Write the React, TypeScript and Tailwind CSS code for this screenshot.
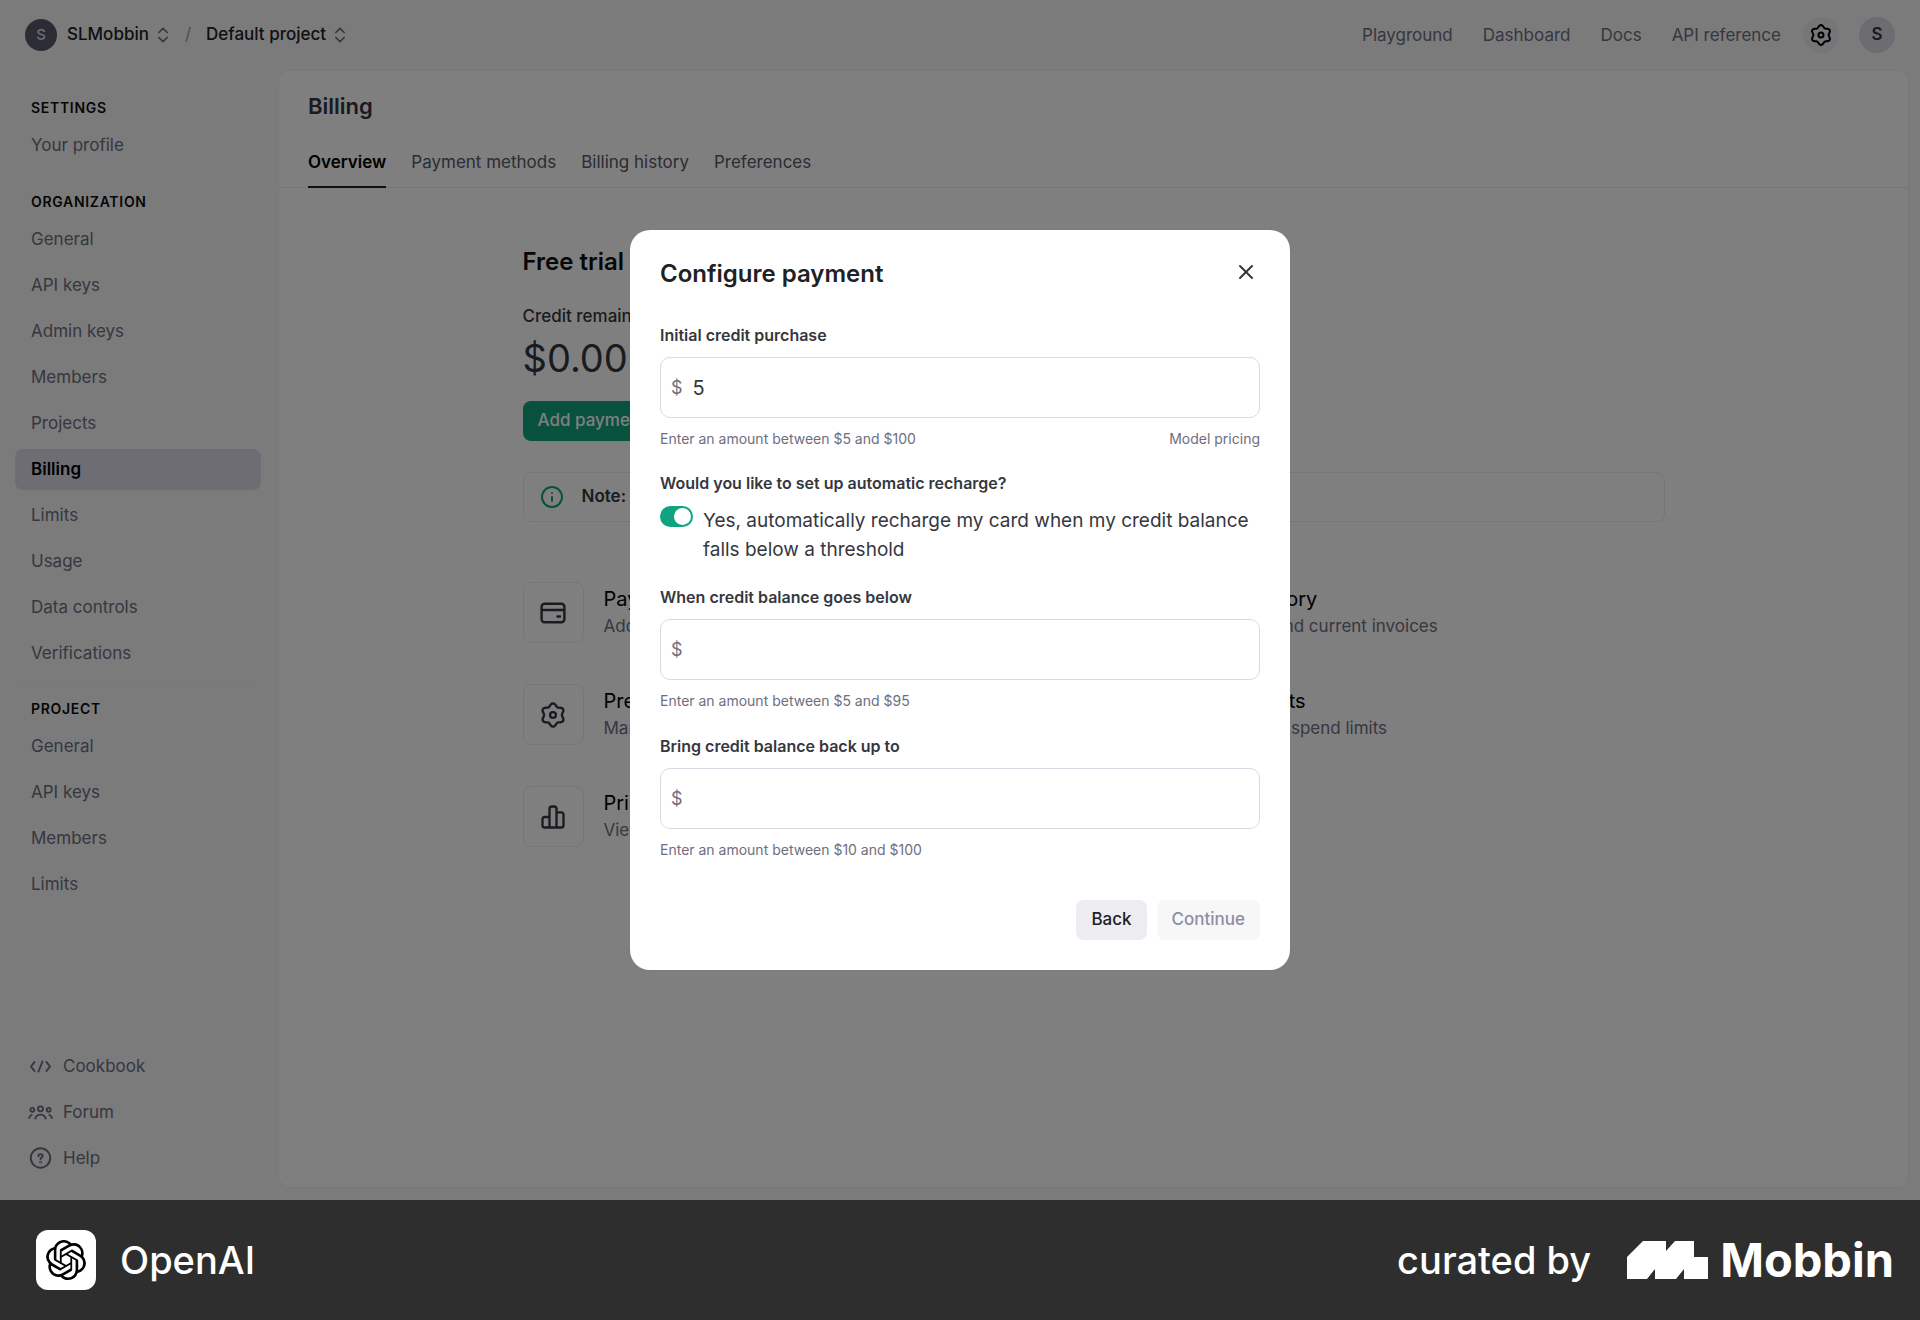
import { useState, type ReactNode } from 'react'
import { ChevronsUpDown, X, Info } from 'lucide-react'
import { SiOpenai } from 'react-icons/si'

const organizationLinks = [
  'General',
  'API keys',
  'Admin keys',
  'Members',
  'Projects',
  'Billing',
  'Limits',
  'Usage',
  'Data controls',
  'Verifications',
]

const projectLinks = ['General', 'API keys', 'Members', 'Limits']

const tabs = ['Overview', 'Payment methods', 'Billing history', 'Preferences']

// six soft lobes, first one pointing up
const gearPoints = Array.from({ length: 72 }, (_, i) => {
  const angle = (i * Math.PI) / 36
  const radius = 8.8 + 1.2 * Math.cos(6 * angle)
  return `${(12 + radius * Math.sin(angle)).toFixed(2)},${(12 - radius * Math.cos(angle)).toFixed(2)}`
}).join(' ')

function GearIcon({ className }: { className?: string }) {
  return (
    <svg className={className} viewBox="0 0 24 24" fill="none" stroke="currentColor" strokeWidth={2} strokeLinejoin="round">
      <polygon points={gearPoints} />
      <circle cx="12" cy="12" r="2.5" />
    </svg>
  )
}

function CardIcon({ className }: { className?: string }) {
  return (
    <svg className={className} viewBox="0 0 28 28" fill="none" stroke="currentColor" strokeWidth={2.4} strokeLinecap="round">
      <rect x="2.6" y="4.8" width="22.8" height="18.4" rx="3" />
      <path d="M3 11h22M18.500 17.500h2.500" />
    </svg>
  )
}

function BarsIcon({ className }: { className?: string }) {
  return (
    <svg className={className} viewBox="0 0 24 24" fill="none" stroke="currentColor" strokeWidth={2} strokeLinejoin="round">
      <path d="M9 21V5a2 2 0 0 1 2-2h2a2 2 0 0 1 2 2v16" />
      <path d="M9 12H5a2 2 0 0 0-2 2v5a2 2 0 0 0 2 2h14a2 2 0 0 0 2-2v-9a2 2 0 0 0-2-2h-4" />
    </svg>
  )
}

function CodeIcon({ className }: { className?: string }) {
  return (
    <svg className={className} viewBox="0 0 25 16" fill="none" stroke="currentColor" strokeWidth={2} strokeLinecap="round" strokeLinejoin="round">
      <path d="M6.500 3 3 7.500l3.500 4.500M18.500 3 22 7.500 18.500 12M14.500 2.500l-4 10" />
    </svg>
  )
}

function PeopleIcon({ className }: { className?: string }) {
  return (
    <svg className={className} viewBox="0 0 26 16" fill="none" stroke="currentColor" strokeWidth={2} strokeLinecap="round">
      <circle cx="13" cy="4" r="2.6" />
      <circle cx="4.500" cy="5" r="2" />
      <circle cx="21.500" cy="5" r="2" />
      <path d="M7.500 14c1-2.600 3-4 5.500-4s4.500 1.400 5.500 4M1.200 13.500c.3-1.500 1.200-2.700 2.600-3.200M24.800 13.500c-.3-1.500-1.200-2.700-2.600-3.200" />
    </svg>
  )
}

function HelpIcon({ className }: { className?: string }) {
  return (
    <svg className={className} viewBox="0 0 25 25" fill="none" stroke="currentColor" strokeWidth={2} strokeLinecap="round" strokeLinejoin="round">
      <circle cx="12.5" cy="12" r="9.7" />
      <path d="M10.300 10.100c.1-1.200 1-1.900 2.200-1.900s2.200.8 2.200 1.900c0 1.500-2.200 1.500-2.200 3" />
      <circle cx="12.5" cy="16.2" r="0.4" />
    </svg>
  )
}

function MobbinMark({ className }: { className?: string }) {
  return (
    <svg className={className} viewBox="0 0 81 38" fill="currentColor">
      <path d="M16 0h23v10L48 0h19v16h14v22H57V28l-8 10H28V28l-8 10H0V16z" />
    </svg>
  )
}

function SectionTitle({ children }: { children: ReactNode }) {
  return <h2 className="px-4 text-[14px] leading-5 font-semibold tracking-wider text-[#0d0d0d]">{children}</h2>
}

function NavList({ items, active }: { items: string[]; active?: string }) {
  return (
    <ul className="mt-[7px] space-y-[5px]">
      {items.map((item) => (
        <li key={item}>
          <a
            href="#"
            className={
              item === active
                ? 'block rounded-lg bg-[#dcdbe6] px-4 py-2 text-[17px] leading-[25px] font-semibold text-black'
                : 'block rounded-lg px-4 py-2 text-[17px] leading-[25px] text-[#6e6e80]'
            }
          >
            {item}
          </a>
        </li>
      ))}
    </ul>
  )
}

function Header() {
  return (
    <header className="flex h-[70px] items-center justify-between px-[25px]">
      <div className="flex items-center text-[17px] font-medium text-[#202123]">
        <span className="flex size-8 items-center justify-center rounded-full bg-[#565869] text-[15px] text-[#dcdbe6]">S</span>
        <button className="ml-[10px] flex items-center gap-1">
          SLMobbin <ChevronsUpDown className="size-5 text-[#6e6e80]" />
        </button>
        <span className="mx-3 font-normal text-[#9a9aa8]">/</span>
        <button className="ml-[3px] flex items-center gap-1">
          Default project <ChevronsUpDown className="size-5 text-[#6e6e80]" />
        </button>
      </div>
      <nav className="flex items-center text-[17px] text-[#6e6e80]">
        <div className="flex gap-[30px] pt-px">
          <a href="#">Playground</a>
          <a href="#">Dashboard</a>
          <a href="#">Docs</a>
          <a href="#">API reference</a>
        </div>
        <button aria-label="Settings" className="ml-[22px] flex size-9 items-center justify-center rounded-full bg-[#ececf1] text-black">
          <GearIcon className="size-6" />
        </button>
        <button className="ml-5 size-9 rounded-full bg-[#d9d9e3] font-semibold text-[#353740]">S</button>
      </nav>
    </header>
  )
}

function Sidebar() {
  return (
    <aside className="flex w-[278px] shrink-0 flex-col pt-7 pr-[17px] pb-[21px] pl-[15px]">
      <SectionTitle>SETTINGS</SectionTitle>
      <NavList items={['Your profile']} />
      <div className="mt-[26px]">
        <SectionTitle>ORGANIZATION</SectionTitle>
        <NavList items={organizationLinks} active="Billing" />
      </div>
      <div className="mt-2 border-t border-[#f1f1f4] pt-4">
        <SectionTitle>PROJECT</SectionTitle>
        <NavList items={projectLinks} />
      </div>
      <ul className="mt-auto space-y-[5px] px-[13px] text-[17px] leading-[25px] text-[#6e6e80]">
        <li>
          <a href="#" className="flex items-center gap-[10px] py-2">
            <CodeIcon className="w-[25px]" />
            Cookbook
          </a>
        </li>
        <li>
          <a href="#" className="flex items-center gap-[10px] py-2">
            <PeopleIcon className="w-[25px]" />
            Forum
          </a>
        </li>
        <li>
          <a href="#" className="flex items-center gap-[10px] py-2">
            <HelpIcon className="size-[25px]" />
            Help
          </a>
        </li>
      </ul>
    </aside>
  )
}

function LinkCard({ icon, title, text }: { icon: ReactNode; title: string; text: string }) {
  return (
    <a href="#" className="flex items-center gap-5">
      <span className="flex size-[61px] items-center justify-center rounded-lg border border-[#ececf1] text-[#353740]">{icon}</span>
      <span>
        <span className="block text-[20px] leading-7 text-black">{title}</span>
        <span className="block text-[17px] leading-[27px] text-[#6e6e80]">{text}</span>
      </span>
    </a>
  )
}

function Billing() {
  return (
    <main className="mr-[11px] mb-3 flex-1 rounded-xl border border-[#f1f1f4] bg-white">
      <h1 className="px-[29px] pt-[19px] text-[22px] leading-8 font-semibold text-[#353740]">Billing</h1>
      <nav className="mt-[18px] flex gap-[25px] border-b border-[#ececf1] px-[29px] text-[17px] leading-6 text-[#565869]">
        {tabs.map((tab, i) => (
          <a
            key={tab}
            href="#"
            className={i === 0 ? '-mb-px border-b-2 border-[#202123] pt-[10px] pb-3 font-semibold text-black' : 'pt-[10px] pb-3'}
          >
            {tab}
          </a>
        ))}
      </nav>
      <div className="mx-auto max-w-[1142px] pt-14">
        <h2 className="text-[24px] leading-9 font-semibold text-[#0d0d0d]">Free trial</h2>
        <p className="mt-6 text-[17px] leading-6 font-medium text-[#353740]">Credit remaining</p>
        <p className="mt-1 text-[38px] leading-[52px] text-[#353740]">$0.00</p>
        <button className="mt-[17px] h-10 rounded-lg bg-[#10a37f] px-[15px] text-[17px] font-medium text-white">
          Add payment details
        </button>
        <div className="mt-[31px] flex h-[50px] items-center rounded-lg border border-[#ececf1] px-4 text-[17px] text-[#353740]">
          <Info className="mr-[18px] size-6 text-[#10a37f]" />
          <p>
            <strong className="font-semibold">Note:</strong> This does not reflect the status of your ChatGPT account.
          </p>
        </div>
        <div className="mt-[60px] grid grid-cols-2 gap-x-8 gap-y-[41px]">
          <LinkCard icon={<CardIcon className="size-7" />} title="Payment methods" text="Add or change payment method" />
          <LinkCard icon={<CardIcon className="size-7" />} title="Billing history" text="View past and current invoices" />
          <LinkCard icon={<GearIcon className="size-7" />} title="Preferences" text="Manage billing information" />
          <LinkCard icon={<GearIcon className="size-7" />} title="Usage limits" text="Set monthly spend limits" />
          <LinkCard icon={<BarsIcon className="size-7" />} title="Pricing" text="View pricing and FAQs" />
        </div>
      </div>
    </main>
  )
}

type AmountFieldProps = {
  id: string
  label: string
  hint: string
  defaultValue?: string
  children?: ReactNode
}

function AmountField({ id, label, hint, defaultValue, children }: AmountFieldProps) {
  return (
    <div>
      <label htmlFor={id} className="block text-[16px] leading-6 font-semibold text-[#353740]">
        {label}
      </label>
      <div className="mt-[10px] flex h-[61px] items-center rounded-[10px] border border-[#d9d9e3] px-[10px]">
        <span className="text-[18px] text-[#6e6e80]">$</span>
        <input
          id={id}
          type="text"
          inputMode="numeric"
          defaultValue={defaultValue}
          className="ml-[10px] min-w-0 flex-1 text-[20px] text-[#353740] outline-none"
        />
      </div>
      <div className="mt-[10px] flex justify-between text-[14px] leading-[22px] text-[#6e6e80]">
        <span>{hint}</span>
        {children}
      </div>
    </div>
  )
}

function ConfigurePayment() {
  const [autoRecharge, setAutoRecharge] = useState(true)

  return (
    <div role="dialog" aria-labelledby="dialog-title" className="w-[660px] rounded-[20px] bg-white px-[30px] pt-[26px] pb-[30px]">
      <div className="flex items-start justify-between">
        <h2 id="dialog-title" className="text-[24px] leading-9 font-semibold text-[#202123]">
          Configure payment
        </h2>
        <button aria-label="Close" className="mt-1 mr-0.5 text-[#353740]">
          <X className="size-6" strokeWidth={2} />
        </button>
      </div>
      <div className="mt-[31px]">
        <AmountField id="initial" label="Initial credit purchase" hint="Enter an amount between $5 and $100" defaultValue="5">
          <a href="#">Model pricing</a>
        </AmountField>
      </div>
      <h3 className="mt-[21px] text-[16px] leading-6 font-semibold text-[#353740]">
        Would you like to set up automatic recharge?
      </h3>
      <label className="mt-[11px] flex gap-[10px] text-[#353740]">
        <input
          type="checkbox"
          role="switch"
          checked={autoRecharge}
          onChange={(e) => setAutoRecharge(e.target.checked)}
          className="h-[21px] w-[33px] shrink-0 appearance-none rounded-full bg-[#c5c5d2] p-[2px] before:block before:size-[17px] before:rounded-full before:bg-white checked:bg-[#10a37f] checked:before:ml-3"
        />
        <span className="text-[19px] leading-[29px]">
          Yes, automatically recharge my card when my credit balance falls below a threshold
        </span>
      </label>
      <div className="mt-[21px] space-y-[22px]">
        <AmountField id="threshold" label="When credit balance goes below" hint="Enter an amount between $5 and $95" />
        <AmountField id="target" label="Bring credit balance back up to" hint="Enter an amount between $10 and $100" />
      </div>
      <div className="mt-[39px] flex justify-end gap-[10px] text-[17px] font-medium">
        <button className="h-10 rounded-lg bg-[#ececf1] px-[15px] text-[#202123]">Back</button>
        <button disabled className="h-10 rounded-lg bg-[#f7f7f8] px-[15px] text-[#8e8ea0]">
          Continue
        </button>
      </div>
    </div>
  )
}

function Footer() {
  return (
    <footer className="flex h-[120px] items-center justify-between bg-[#2e2e2e] pr-[26px] pl-9 text-white">
      <div className="flex items-center gap-6">
        <span className="flex size-[60px] items-center justify-center rounded-xl bg-white text-black">
          <SiOpenai className="size-10" />
        </span>
        <span className="text-[38px] font-medium">OpenAI</span>
      </div>
      <div className="flex items-center">
        <span className="text-[38px] font-medium">curated by</span>
        <MobbinMark className="ml-9 w-[81px]" />
        <span className="ml-3 text-[47px] font-bold">Mobbin</span>
      </div>
    </footer>
  )
}

export default function App() {
  return (
    <div className="flex min-h-screen flex-col font-['Inter','Liberation_Sans',sans-serif]">
      <div className="relative flex flex-1 flex-col bg-[#f6f6f7]">
        <Header />
        <div className="flex flex-1">
          <Sidebar />
          <Billing />
        </div>
        <div className="absolute inset-0 flex items-center justify-center bg-black/50">
          <ConfigurePayment />
        </div>
      </div>
      <Footer />
    </div>
  )
}
